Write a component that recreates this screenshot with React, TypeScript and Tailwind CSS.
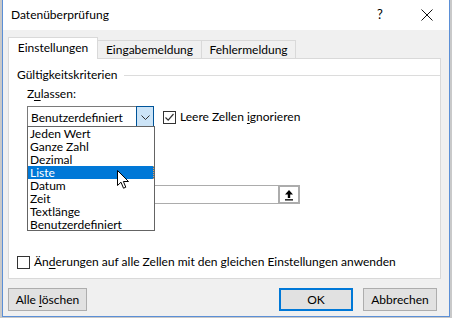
import React from "react";

const U = ({ children }: { children: React.ReactNode }) => (
  <span className="underline underline-offset-2 decoration-1">{children}</span>
);

function CheckBox({ checked }: { checked: boolean }) {
  return (
    <div className="w-[13px] h-[13px] border border-[#333] bg-white flex items-center justify-center shrink-0">
      {checked && (
        <svg width="11" height="11" viewBox="0 0 11 11">
          <path d="M1.5 5.5 L4.2 8.2 L9.5 2" fill="none" stroke="#333" strokeWidth="1.2" />
        </svg>
      )}
    </div>
  );
}

export default function App() {
  const items = ["Jeden Wert", "Ganze Zahl", "Dezimal", "Liste", "Datum", "Zeit", "Textlänge", "Benutzerdefiniert"];
  return (
    <div
      className="w-[452px] h-[318px] bg-[#c9c9c9] pl-[2px] pr-[2px] pb-[1px] overflow-hidden text-[12px] text-black"
      style={{ fontFamily: '"Segoe UI", Lato, "Noto Sans", sans-serif' }}
    >
      <div className="w-[448px] h-[317px] border-x border-b border-[#5b8fd6] bg-[#f0f0f0] flex flex-col">
        {/* Title bar */}
        <div className="h-[30px] bg-white flex items-center shrink-0">
          <div className="pl-[8px] text-[12px] leading-none flex-1">Datenüberprüfung</div>
          <div className="w-[20px] text-center text-[13px] mr-[27px]">?</div>
          <div className="w-[20px] flex items-center justify-center mr-[12px]">
            <svg width="12" height="12" viewBox="0 0 12 12">
              <path d="M0.5 0.5 L11.5 11.5 M11.5 0.5 L0.5 11.5" stroke="#111" strokeWidth="1" />
            </svg>
          </div>
        </div>
        {/* Body */}
        <div className="flex-1 flex flex-col px-[5px] pt-[7px]">
          {/* Tabs */}
          <div className="flex items-end h-[22px] relative z-10 -mb-px">
            <div className="h-[22px] w-[90px] bg-white border border-b-0 border-[#d9d9d9] flex items-center justify-center pb-[1px]">
              Einstellungen
            </div>
            <div className="h-[19px] w-[104px] border border-l-0 border-[#d9d9d9] flex items-center justify-center">
              Eingabemeldung
            </div>
            <div className="h-[19px] w-[94px] border border-l-0 border-[#d9d9d9] flex items-center justify-center">
              Fehlermeldung
            </div>
          </div>
          {/* Panel */}
          <div className="w-[433px] h-[221px] bg-white border border-[#d9d9d9] relative flex flex-col pl-[8px]">
            <div className="flex items-center mt-[9px] h-[14px]">
              <span>Gültigkeitskriterien</span>
              <div className="flex-1 h-px bg-[#dcdcdc] ml-[6px]"></div>
            </div>
            <div className="ml-[10px] mt-[5px] h-[14px] flex items-center">
              <span>
                Z<U>u</U>lassen:
              </span>
            </div>
            <div className="flex items-start mt-[5px] ml-[10px]">
              <div className="w-[127px] h-[23px] border border-[#7a7a7a] flex items-stretch">
                <div className="flex-1 flex items-center pl-[3px]">Benutzerdefiniert</div>
                <div className="w-[18px] -m-px bg-[#cce4f7] border border-[#005499] flex items-center justify-center">
                  <svg width="9" height="6" viewBox="0 0 9 6">
                    <path d="M0.5 0.5 L4.5 4.5 L8.5 0.5" fill="none" stroke="#333" strokeWidth="1" />
                  </svg>
                </div>
              </div>
              <div className="flex items-center ml-[9px] mt-[2px] gap-[4px]">
                <CheckBox checked />
                <span>
                  Leere Zellen <U>i</U>gnorieren
                </span>
              </div>
            </div>
            {/* Source input (behind list) */}
            <div className="ml-[10px] mt-[56px] w-[273px] h-[19px] border border-[#acacac] flex justify-end">
              <div className="w-[22px] h-[19px] -m-px border-2 border-[#acacac] bg-white flex items-center justify-center">
                <svg width="10" height="12" viewBox="0 0 10 12">
                  <path d="M5 1 L9 5.5 L6.2 5.5 L6.2 9 L3.8 9 L3.8 5.5 L1 5.5 Z" fill="#000" />
                  <rect x="1" y="10.2" width="8" height="1.3" fill="#000" />
                </svg>
              </div>
            </div>
            <div className="flex items-center mt-[49px] gap-[4px]">
              <CheckBox checked={false} />
              <span>
                Än<U>d</U>erungen auf alle Zellen mit den gleichen Einstellungen anwenden
              </span>
            </div>
            {/* Dropdown list overlay */}
            <div className="absolute left-[18px] top-[67px] w-[128px] h-[105px] bg-white border border-[#646464] flex flex-col">
              {items.map((it) => (
                <div
                  key={it}
                  className={
                    it === "Liste"
                      ? "h-[13px] leading-[13px] pl-[2px] bg-[#0078d7] text-white border-r border-dotted border-[#f0a050]"
                      : "h-[13px] leading-[13px] pl-[2px]"
                  }
                >
                  {it}
                </div>
              ))}
            </div>
            {/* Cursor */}
            <svg className="absolute left-[108px] top-[111px]" width="13" height="20" viewBox="0 0 13 20">
              <path
                d="M0.5 0.5 L0.5 15.5 L4 12.2 L6.5 18.2 L8.8 17.2 L6.4 11.5 L11.5 11.5 Z"
                fill="#fff"
                stroke="#000"
                strokeWidth="1"
                strokeLinejoin="round"
              />
            </svg>
          </div>
          {/* Buttons */}
          <div className="flex items-center mt-[9px]">
            <div className="w-[79px] h-[23px] border border-[#adadad] bg-[#e1e1e1] flex items-center justify-center">
              <span>
                Alle <U>l</U>öschen
              </span>
            </div>
            <div className="flex-1"></div>
            <div className="w-[74px] h-[23px] border-2 border-[#0078d7] bg-[#e1e1e1] flex items-center justify-center">
              OK
            </div>
            <div className="w-[74px] h-[23px] ml-[10px] mr-[7px] border border-[#adadad] bg-[#e1e1e1] flex items-center justify-center">
              Abbrechen
            </div>
          </div>
        </div>
      </div>
    </div>
  );
}
